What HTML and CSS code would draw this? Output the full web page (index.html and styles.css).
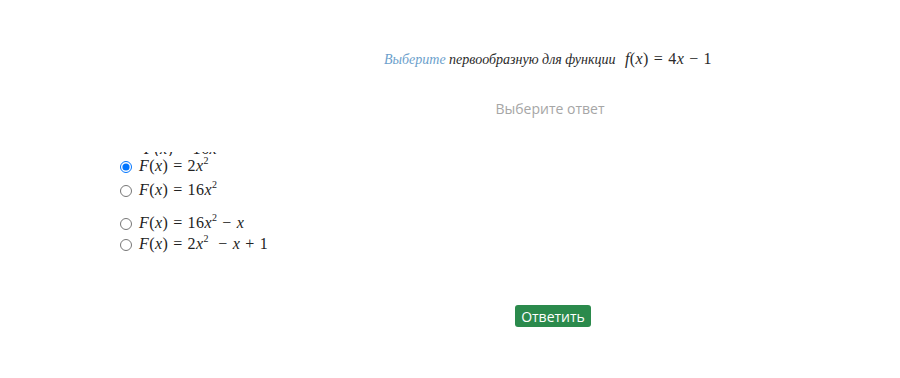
FILE: index.html
```html
<html>
  <head>
    <meta charset="UTF-8" />
    <meta name="viewport" content="width=device-width, initial-scale=1.0" />
    <link rel="stylesheet" href="styles.css">
  </head>
  <body>
    <form class="quiz">
      <div class="question">
        <span class="hint">Выберите</span> первообразную для функции
        <span class="math"><i>f</i>(<i>x</i>)<span class="op">=</span>4<i>x</i><span class="op">&minus;</span>1</span>
      </div>
      <div class="placeholder">Выберите ответ</div>

      <div class="options">
        <div class="clipped">
          <span class="math"><i>F</i>(<i>x</i>)<span class="op">=</span>16<i>x</i></span>
        </div>
        <label class="option first">
          <input type="radio" name="answer" checked />
          <span class="math"><i>F</i>(<i>x</i>)<span class="op">=</span>2<i>x</i><sup>2</sup></span>
        </label>
        <label class="option">
          <input type="radio" name="answer" />
          <span class="math"><i>F</i>(<i>x</i>)<span class="op">=</span>16<i>x</i><sup>2</sup></span>
        </label>
        <label class="option gap">
          <input type="radio" name="answer" />
          <span class="math"><i>F</i>(<i>x</i>)<span class="op">=</span>16<i>x</i><sup>2</sup><span class="op">&minus;</span><i>x</i></span>
        </label>
        <label class="option">
          <input type="radio" name="answer" />
          <span class="math"><i>F</i>(<i>x</i>)<span class="op">=</span>2<i>x</i><sup>2</sup>&nbsp;<span class="op">&minus;</span><i>x</i><span class="op">+</span>1</span>
        </label>
      </div>

      <div class="actions">
        <button class="submit" type="button">Ответить</button>
      </div>
    </form>
  </body>
</html>
```

FILE: styles.css
```css
body {
  margin: 0;
  background-color: #ffffff;
  color: #222222;
  font-family: "Liberation Serif", serif;
}

.quiz {
  margin: 0;
}

.question {
  padding-top: 50px;
  padding-left: 196px;
  text-align: center;
  font-style: italic;
  font-size: 14px;
  color: #2a2a2a;
}

.hint {
  color: #6c9fcc;
}

.math {
  font-style: normal;
  font-size: 16px;
  margin-left: 6px;
  letter-spacing: 0.4px;
}

.math .op {
  margin: 0 5px;
}

.math sup {
  font-size: 10px;
  vertical-align: 7px;
  line-height: 0;
}

.placeholder {
  padding-top: 31px;
  padding-left: 200px;
  text-align: center;
  font-family: "Open Sans", sans-serif;
  font-size: 14px;
  color: #a6a6a6;
}

.options {
  padding-top: 34px;
  padding-left: 120px;
}

.clipped {
  height: 4px;
  overflow: hidden;
  padding-left: 18px;
}

.clipped .math {
  display: block;
  margin-top: -12px;
}

.option {
  display: flex;
  align-items: center;
  height: 21px;
}

.option.first {
  margin-top: -1px;
  margin-bottom: 3px;
}

.option.gap {
  margin-top: 12px;
}

.option input {
  margin: 2px 4px 0 0;
  width: 12px;
  height: 12px;
}

.option .math {
  margin-left: 3px;
}

.actions {
  padding-top: 51px;
  padding-left: 206px;
  text-align: center;
}

.submit {
  background-color: #2b8a4c;
  border: none;
  border-radius: 3px;
  color: #ffffff;
  font-family: "Open Sans", sans-serif;
  font-size: 14px;
  height: 22px;
  padding: 0 6px;
}
```
